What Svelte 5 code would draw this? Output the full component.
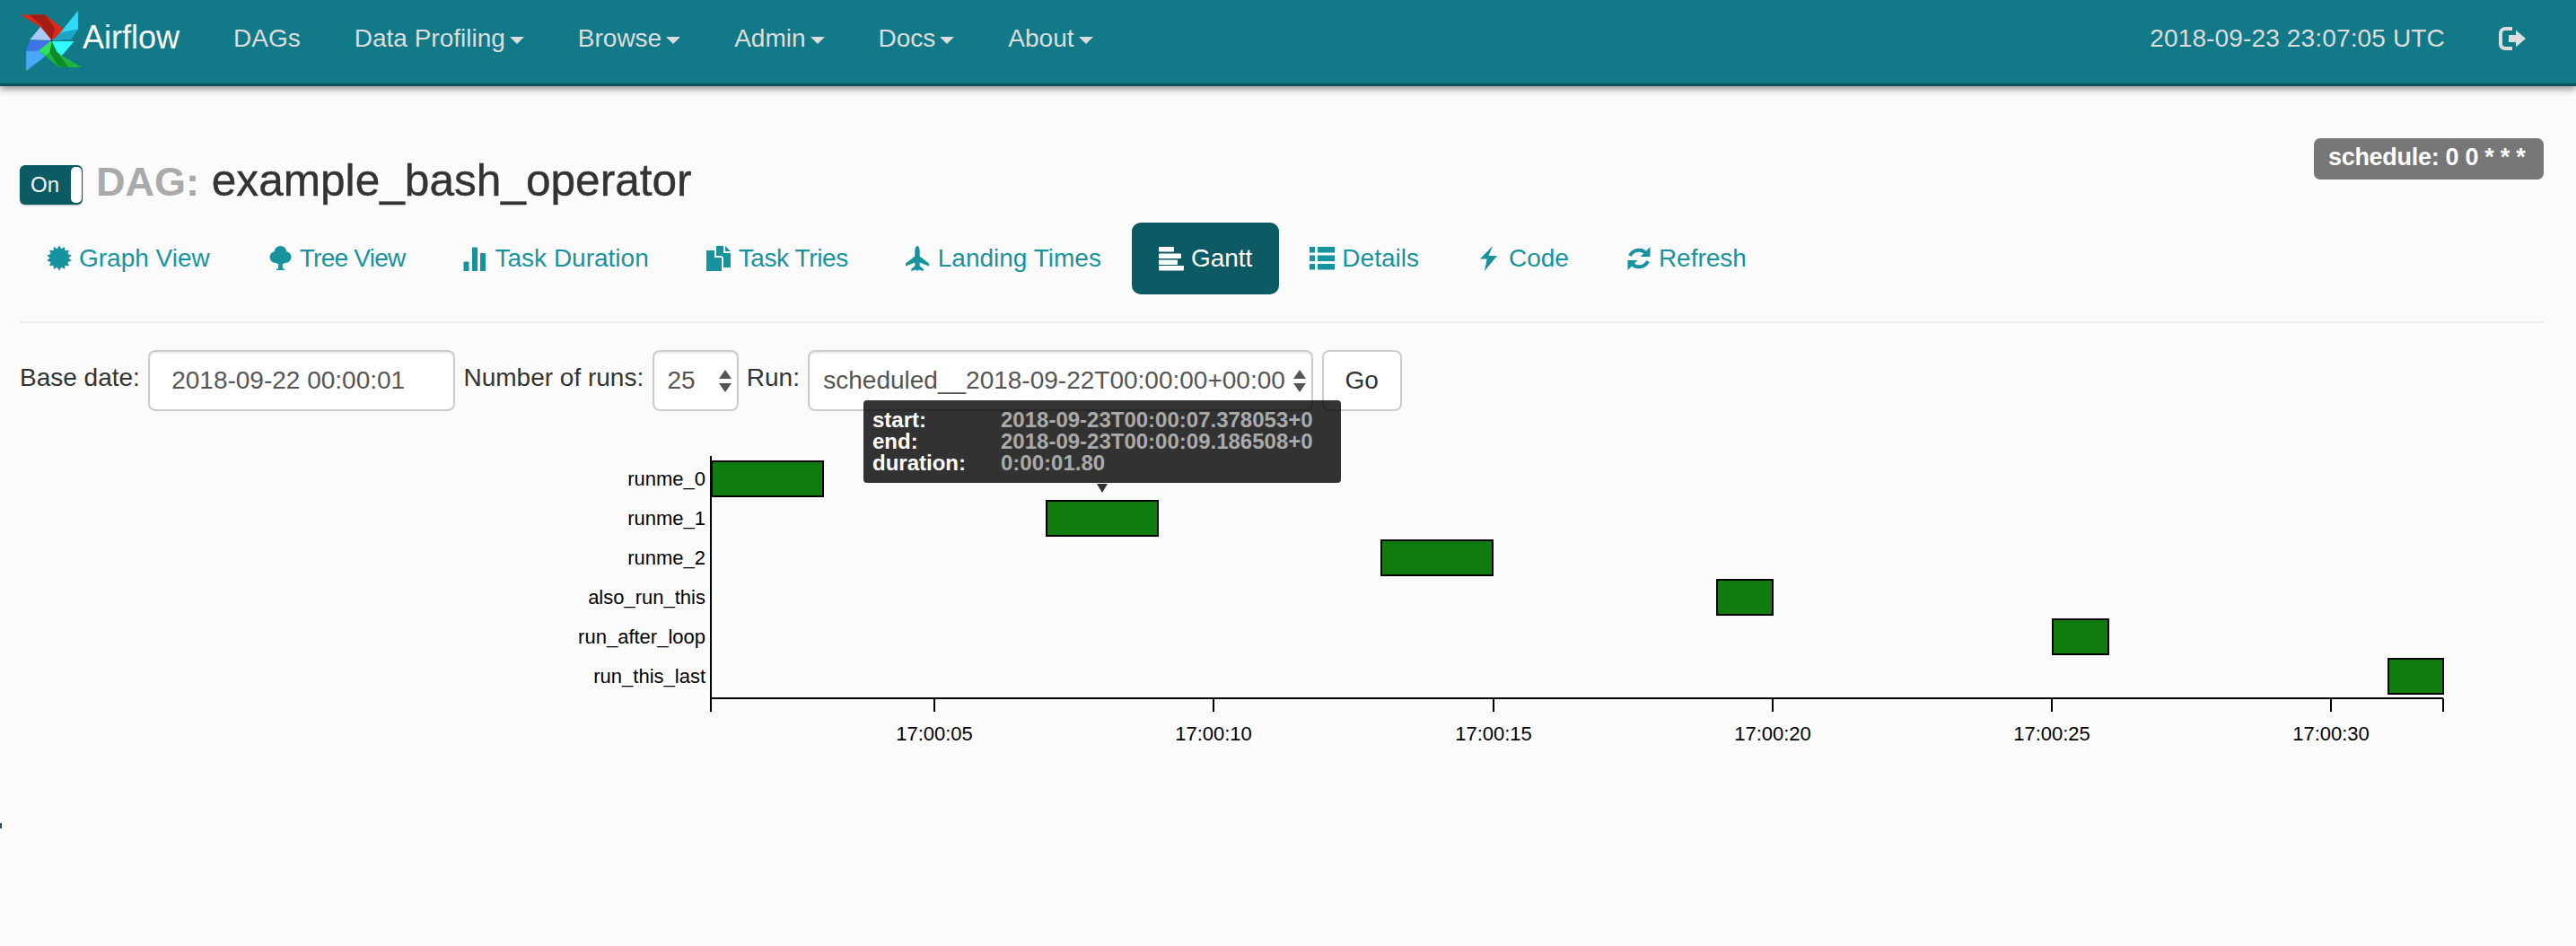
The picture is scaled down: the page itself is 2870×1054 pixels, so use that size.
<script>
  const menu = [
    { label: 'DAGs' },
    { label: 'Data Profiling', caret: true },
    { label: 'Browse', caret: true },
    { label: 'Admin', caret: true },
    { label: 'Docs', caret: true },
    { label: 'About', caret: true }
  ];

  function star(cx, cy, ro, ri, n) {
    let d = '';
    for (let i = 0; i < n * 2; i++) {
      const r = i % 2 ? ri : ro;
      const a = (Math.PI * i) / n - Math.PI / 2;
      d += (i ? 'L' : 'M') + (cx + r * Math.cos(a)).toFixed(2) + ' ' + (cy + r * Math.sin(a)).toFixed(2);
    }
    return d + 'Z';
  }

  const tabs = [
    { label: 'Graph View', d: star(14, 13.5, 14, 10.5, 14) },
    { label: 'Tree View', tight: 'tight-a', d: 'M7.500 7a7 7 0 1 1 14 0a7 7 0 1 1-14 0zM2.500 12.500a6.500 6.500 0 1 1 13 0a6.500 6.500 0 1 1-13 0zM13.500 12.500a6.500 6.500 0 1 1 13 0a6.500 6.500 0 1 1-13 0zM8 14.500a6.500 6.500 0 1 1 13 0a6.500 6.500 0 1 1-13 0zM12.500 15h4l.5 10.500h2V27h-9v-1.500h2z' },
    { label: 'Task Duration', d: 'M1 17.500h4.500a1 1 0 0 1 1 1V28H.5v-9.500a1 1 0 0 1 .5-1zM11 1.500h4a1 1 0 0 1 1 1V28h-6V2.500a1 1 0 0 1 1-1zM20 8h4a1 1 0 0 1 1 1v19h-6V9a1 1 0 0 1 1-1z' },
    { label: 'Task Tries', tight: 'tight-b', d: 'M0 5h9v8h8v15H0zM11 5l6 6h-6zM11 0h8v8h8v16h-8v-11l-8-8zM21 0l6 6h-6z' },
    { label: 'Landing Times', d: 'M13 0c1.800 0 2.700 3 2.700 6v5.500L26 19.500v3l-10.300-4v4l4 3v2.500l-5-1.500-1.700 1.500-1.700-1.500-5 1.500v-2.500l4-3v-4L0 22.500v-3l10.300-8V6c0-3 .9-6 2.700-6z' },
    { label: 'Gantt', active: true, d: 'M1 1h15a1 1 0 0 1 1 1v3.500a1 1 0 0 1-1 1H1a1 1 0 0 1-1-1V2a1 1 0 0 1 1-1zM1 8.500h23a1 1 0 0 1 1 1V13a1 1 0 0 1-1 1H1a1 1 0 0 1-1-1V9.500a1 1 0 0 1 1-1zM1 15.500h19a1 1 0 0 1 1 1V20a1 1 0 0 1-1 1H1a1 1 0 0 1-1-1v-3.500a1 1 0 0 1 1-1zM1 22h26a1 1 0 0 1 1 1v3.500a1 1 0 0 1-1 1H1a1 1 0 0 1-1-1V23a1 1 0 0 1 1-1z' },
    { label: 'Details', d: 'M0 1h6v6.500H0zM9 1h19v6.500H9zM0 10.500h6V17H0zM9 10.500h19V17H9zM0 20h6v6.500H0zM9 20h19v6.500H9z' },
    { label: 'Code', d: 'M18 0 4 14.500h7.600L9 28 23 11h-9.500z' },
    { label: 'Refresh', d: 'M26.500 1v11h-11zM1.500 27V16h11z', line: 'M23 9.500A11 11 0 0 0 4 11M5 18.500A11 11 0 0 0 24 17' }
  ];

  const rows = [
    { name: 'runme_0', x: 792, w: 125 },
    { name: 'runme_1', x: 1165, w: 125 },
    { name: 'runme_2', x: 1538, w: 125 },
    { name: 'also_run_this', x: 1912, w: 63 },
    { name: 'run_after_loop', x: 2286, w: 63 },
    { name: 'run_this_last', x: 2660, w: 62 }
  ];

  const ticks = [
    { x: 1041, t: '17:00:05' },
    { x: 1352, t: '17:00:10' },
    { x: 1664, t: '17:00:15' },
    { x: 1975, t: '17:00:20' },
    { x: 2286, t: '17:00:25' },
    { x: 2597, t: '17:00:30' }
  ];
</script>

<div class="page">
  <nav class="navbar">
    <a class="brand" href="#top">
      <svg class="logo" viewBox="70 35 200 200" aria-hidden="true">
        <polygon points="70,48 150,48 218,100 198,128 172,132 135,88" fill="#dc2a1a" />
        <polygon points="98,48 150,48 182,92 172,132 135,80" fill="#a51c12" />
        <polygon points="258,35 258,95 235,128 172,132 185,125" fill="#2fdcf7" />
        <polygon points="258,95 205,105 172,132 235,128" fill="#1ba5c9" />
        <polygon points="172,135 245,135 205,182 175,160" fill="#2dfbff" />
        <polygon points="270,220 195,220 130,165 150,135 172,135 175,160 205,182" fill="#1cb53b" />
        <polygon points="172,135 165,172 195,218 228,220 190,172" fill="#0e8a2a" />
        <polygon points="130,165 150,135 172,135 165,172 150,182" fill="#2ee25c" />
        <polygon points="88,232 88,165 130,165 150,185" fill="#4aa8fb" />
        <polygon points="88,168 100,132 170,133 130,165" fill="#3f73e8" />
        <polygon points="135,88 172,132 100,130" fill="#abc9fb" />
        <circle cx="171" cy="133" r="3" fill="#111" />
      </svg>
      <span>Airflow</span>
    </a>
    <ul class="menu">
      {#each menu as item}
        <li><a href="#top">{item.label}{#if item.caret}<b class="caret"></b>{/if}</a></li>
      {/each}
    </ul>
    <div class="nav-right">
      <span class="clock">2018-09-23 23:07:05 UTC</span>
      <svg class="logout" viewBox="0 0 30 26" aria-hidden="true">
        <path d="M15 2H7a5 5 0 0 0-5 5v12a5 5 0 0 0 5 5h8" fill="none" stroke="#ddd" stroke-width="4" />
        <path d="M11 9h8V3.500L30 13 19 22.500V17h-8z" fill="#ddd" />
      </svg>
    </div>
  </nav>

  <main class="content">
    <header class="head">
      <div class="title-row">
        <div class="toggle"><span>On</span><i></i></div>
        <h4><span class="dag">DAG:</span> example_bash_operator</h4>
      </div>
      <span class="badge">schedule: 0 0 * * *</span>
    </header>

    <ul class="tabs">
      {#each tabs as tab}
        <li class:active={tab.active}>
          <a href="#top">
            <svg class="ico" viewBox="0 0 28 28" aria-hidden="true">
              <path d={tab.d} fill="currentColor" />
              {#if tab.line}<path d={tab.line} fill="none" stroke="currentColor" stroke-width="4" />{/if}
            </svg>
            <span class={tab.tight}>{tab.label}</span>
          </a>
        </li>
      {/each}
    </ul>

    <form class="filters">
      <label for="base">Base date:</label>
      <input id="base" class="ctl date" value="2018-09-22 00:00:01" />
      <label for="num">Number of runs:</label>
      <span class="sel num">
        <select id="num" class="ctl"><option>25</option></select>
        <i class="up"></i><i class="down"></i>
      </span>
      <label for="run">Run:</label>
      <span class="sel run">
        <select id="run" class="ctl"><option>scheduled__2018-09-22T00:00:00+00:00</option></select>
        <i class="up"></i><i class="down"></i>
      </span>
      <button type="button" class="go">Go</button>
    </form>
  </main>

  <section class="chart">
    <svg class="gantt" viewBox="0 458 2870 470" aria-label="Gantt chart">
      <path d="M792 508V778H2722M792 778V793M2722 778V793" fill="none" stroke="#000" stroke-width="2" />
      {#each ticks as tick}
        <path d="M{tick.x} 778V793" stroke="#000" stroke-width="2" />
        <text x={tick.x} y="825" text-anchor="middle">{tick.t}</text>
      {/each}
      {#each rows as row, i}
        <text x="786" y={541 + i * 44} text-anchor="end">{row.name}</text>
        <rect x={row.x + 1} y={514 + i * 44} width={row.w - 1} height="39" fill="#107c10" stroke="#000" stroke-width="2" />
      {/each}
    </svg>
    <div class="tip">
      <dl>
        <dt>start:</dt><dd>2018-09-23T00:00:07.378053+0</dd>
        <dt>end:</dt><dd>2018-09-23T00:00:09.186508+0</dd>
        <dt>duration:</dt><dd>0:00:01.80</dd>
      </dl>
      <i class="tip-arrow"></i>
    </div>
    <i class="speck"></i>
  </section>
</div>

<style>
  :global(body) {
    margin: 0;
    background: #fbfbfb;
  }
  .page {
    font-family: "Liberation Sans", Arial, sans-serif;
    font-size: 28px;
    line-height: 40px;
    color: #333;
    min-height: 1054px;
    overflow: hidden;
  }
  a {
    text-decoration: none;
    color: inherit;
  }
  ul {
    list-style: none;
    margin: 0;
    padding: 0;
  }

  .navbar {
    display: flex;
    align-items: flex-start;
    height: 93px;
    padding-left: 23px;
    padding-right: 56px;
    background: #117987;
    border-bottom: 3px solid #0b525c;
    box-shadow: 0 3px 8px rgba(0, 0, 0, 0.45);
    color: #ddd;
  }
  .brand {
    display: flex;
    align-items: flex-start;
    color: #fff;
    font-size: 36px;
    margin-right: 30px;
  }
  .logo {
    width: 68px;
    height: 68px;
    margin-top: 12px;
    flex: none;
  }
  .brand span {
    margin-top: 22px;
    margin-left: 1px;
  }
  .menu {
    display: flex;
    margin-top: 23px;
  }
  .menu a {
    display: block;
    padding: 0 30px;
  }
  .caret {
    display: inline-block;
    vertical-align: middle;
    margin-left: 5px;
    border-top: 8px solid #ddd;
    border-left: 8px solid transparent;
    border-right: 8px solid transparent;
  }
  .nav-right {
    display: flex;
    align-items: flex-start;
    margin-left: auto;
    margin-top: 23px;
  }
  .clock {
    letter-spacing: 0.15px;
  }
  .logout {
    width: 30px;
    height: 26px;
    margin-left: 60px;
    margin-top: 7px;
  }

  .content {
    padding: 58px 36px 0 22px;
  }
  .head {
    display: flex;
    justify-content: space-between;
    align-items: flex-start;
  }
  .title-row {
    display: flex;
    align-items: flex-end;
    gap: 15px;
    height: 56px;
    margin-top: 18px;
  }
  .toggle {
    box-sizing: border-box;
    display: flex;
    align-items: center;
    justify-content: space-between;
    width: 70px;
    height: 44px;
    padding: 2px 1px 2px 12px;
    background: #0b5a64;
    border-radius: 6px;
    color: #fff;
    font-size: 24px;
    box-shadow: 0 1px 2px rgba(0, 0, 0, 0.25);
  }
  .toggle i {
    display: block;
    width: 12px;
    height: 40px;
    background: #fff;
    border-radius: 5px;
  }
  h4 {
    margin: 0 0 -3px;
    font-size: 49.6px;
    line-height: 56px;
    font-weight: 400;
    color: #333;
    -webkit-text-stroke: 0.4px #333;
    white-space: nowrap;
  }
  .dag {
    color: #aaa;
    font-size: 45px;
    font-weight: 700;
    -webkit-text-stroke: 0;
  }
  .badge {
    box-sizing: border-box;
    width: 256px;
    height: 46px;
    padding: 0 0 0 16px;
    background: #777;
    border-radius: 7px;
    color: #fff;
    font-size: 27px;
    font-weight: 700;
    letter-spacing: -0.3px;
    line-height: 42px;
    white-space: nowrap;
  }

  .tabs {
    display: flex;
    gap: 4px;
    margin-top: 20px;
    padding-bottom: 30px;
    border-bottom: 2px solid #eee;
  }
  .tabs a {
    display: flex;
    align-items: center;
    gap: 8px;
    height: 40px;
    padding: 20px 30px;
    color: #17939f;
    border-radius: 10px;
    white-space: nowrap;
  }
  .tabs .active a {
    background: #0b5a64;
    color: #fff;
  }
  .tight-a {
    letter-spacing: -0.75px;
  }
  .tight-b {
    letter-spacing: -0.4px;
  }
  .ico {
    width: 28px;
    height: 28px;
    flex: none;
  }

  .filters {
    display: flex;
    align-items: flex-start;
    gap: 9.3px;
    margin-top: 30px;
    height: 68px;
  }
  label {
    padding-top: 11px;
    white-space: nowrap;
  }
  .ctl {
    box-sizing: border-box;
    display: block;
    height: 68px;
    margin: 0;
    border: 2px solid #ccc;
    border-radius: 8px;
    background: #fff;
    font: inherit;
    color: #555;
    box-shadow: inset 0 2px 2px rgba(0, 0, 0, 0.075);
    outline: none;
    appearance: none;
  }
  .date {
    width: 342px;
    padding: 0 24px;
  }
  .sel {
    position: relative;
    display: block;
  }
  .sel .ctl {
    width: 100%;
    padding: 0 0 0 15px;
  }
  .num {
    width: 96px;
  }
  .run {
    width: 563px;
  }
  .up,
  .down {
    position: absolute;
    right: 8px;
    width: 0;
    border-left: 7px solid transparent;
    border-right: 7px solid transparent;
  }
  .up {
    top: 22px;
    border-bottom: 10px solid #555;
  }
  .down {
    top: 37px;
    border-top: 10px solid #555;
  }
  .go {
    box-sizing: border-box;
    width: 89px;
    height: 68px;
    border: 2px solid #ccc;
    border-radius: 8px;
    background: #fff;
    font: inherit;
    color: #333;
    padding: 0;
  }

  .chart {
    position: relative;
  }
  .gantt {
    display: block;
    width: 2870px;
    height: 470px;
    font-size: 22px;
    fill: #000;
  }
  .tip {
    position: absolute;
    left: 962px;
    top: -12px;
    box-sizing: border-box;
    width: 532px;
    height: 92px;
    padding: 10px;
    background: rgba(0, 0, 0, 0.8);
    border-radius: 4px;
    font-size: 24px;
    line-height: 24px;
    font-weight: 700;
  }
  dl {
    display: grid;
    grid-template-columns: 143px 1fr;
    margin: 0;
  }
  dt {
    color: #fff;
  }
  dd {
    margin: 0;
    color: #aaa;
  }
  .tip-arrow {
    position: absolute;
    left: 260px;
    top: 93px;
    border-top: 10px solid #333;
    border-left: 6.500px solid transparent;
    border-right: 6.500px solid transparent;
  }
  .speck {
    position: absolute;
    left: 0;
    top: 459px;
    width: 2px;
    height: 6px;
    background: #2a4f7a;
  }
</style>
